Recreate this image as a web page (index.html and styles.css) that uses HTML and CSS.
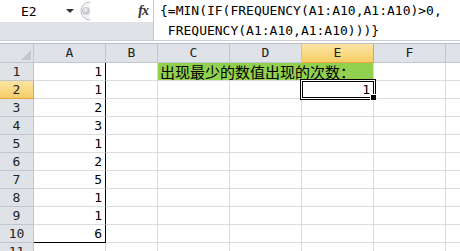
FILE: index.html
```html
<!DOCTYPE html>
<html lang="zh-CN">
<head>
    <meta charset="UTF-8" />
    <title>Excel - FREQUENCY</title>
    <link rel="stylesheet" href="styles.css">
</head>
<body>
    <div class="formula-bar">
        <div class="name-area">
            <div class="name-row">
                <div class="name-box">E2<span class="arrow"></span></div>
                <svg class="grip" width="14" height="22" viewBox="0 0 14 22">
                    <path d="M13 2 A9 9 0 0 0 13 20" fill="#f4f5f7" stroke="#b8bcc2" />
                    <circle cx="9" cy="11" r="4" fill="#c9ccd1" />
                    <circle cx="8.5" cy="10" r="2" fill="#e6e8eb" />
                </svg>
                <div class="fx">fx</div>
            </div>
        </div>
        <div class="formula">{=MIN(IF(FREQUENCY(A1:A10,A1:A10)&gt;0,
 FREQUENCY(A1:A10,A1:A10)))}</div>
    </div>
    <div class="sep"></div>

    <div class="sheet">
        <div class="c h corner"></div>
        <div class="c h">A</div>
        <div class="c h">B</div>
        <div class="c h">C</div>
        <div class="c h">D</div>
        <div class="c h on">E</div>
        <div class="c h">F</div>
        <div class="c h last"></div>

        <div class="c h">1</div>
        <div class="c a">1</div>
        <div class="c"></div>
        <div class="c note">出现最少的数值出现的次数：</div>
        <div class="c"></div>
        <div class="c last"></div>

        <div class="c h on">2</div>
        <div class="c a">1</div>
        <div class="c"></div>
        <div class="c"></div>
        <div class="c"></div>
        <div class="c sel">1</div>
        <div class="c"></div>
        <div class="c last"></div>

        <div class="c h">3</div>
        <div class="c a">2</div>
        <div class="c"></div><div class="c"></div><div class="c"></div><div class="c"></div><div class="c"></div><div class="c last"></div>

        <div class="c h">4</div>
        <div class="c a">3</div>
        <div class="c"></div><div class="c"></div><div class="c"></div><div class="c"></div><div class="c"></div><div class="c last"></div>

        <div class="c h">5</div>
        <div class="c a">1</div>
        <div class="c"></div><div class="c"></div><div class="c"></div><div class="c"></div><div class="c"></div><div class="c last"></div>

        <div class="c h">6</div>
        <div class="c a">2</div>
        <div class="c"></div><div class="c"></div><div class="c"></div><div class="c"></div><div class="c"></div><div class="c last"></div>

        <div class="c h">7</div>
        <div class="c a">5</div>
        <div class="c"></div><div class="c"></div><div class="c"></div><div class="c"></div><div class="c"></div><div class="c last"></div>

        <div class="c h">8</div>
        <div class="c a">1</div>
        <div class="c"></div><div class="c"></div><div class="c"></div><div class="c"></div><div class="c"></div><div class="c last"></div>

        <div class="c h">9</div>
        <div class="c a">1</div>
        <div class="c"></div><div class="c"></div><div class="c"></div><div class="c"></div><div class="c"></div><div class="c last"></div>

        <div class="c h">10</div>
        <div class="c a end">6</div>
        <div class="c"></div><div class="c"></div><div class="c"></div><div class="c"></div><div class="c"></div><div class="c last"></div>

        <div class="c h">11</div>
        <div class="c"></div><div class="c"></div><div class="c"></div><div class="c"></div><div class="c"></div><div class="c"></div><div class="c last"></div>
    </div>
</body>
</html>
```

FILE: styles.css
```css
body { margin: 0; background: #fff; color: #000; font-family: "DejaVu Sans Mono", monospace; font-size: 13px; overflow: hidden; }

.formula-bar { display: flex; height: 40px; }
.name-area { width: 153px; background: #dee1e6; }
.name-row { display: flex; align-items: center; height: 22px; background: #fff; }
.name-box { display: flex; align-items: center; width: 77px; padding-left: 21px; box-sizing: border-box; }
.arrow { margin-left: 29px; border-left: 4px solid transparent; border-right: 4px solid transparent; border-top: 4px solid #333; }
.grip { display: block; }
.fx { margin-left: auto; padding-right: 5px; font-family: "Liberation Serif", serif; font-style: italic; font-weight: bold; font-size: 14px; color: #333; letter-spacing: -1px; }
.formula { flex: 1; border-left: 1px solid #c6cace; padding: 1px 0 0 6px; line-height: 20px; white-space: pre; }
.sep { height: 2px; background: #fff; border-top: 1px solid #c9cdd2; border-bottom: 1px solid #b7bec8; }

.sheet { display: grid; grid-template-columns: 34px 72px 52px 72px 72px 72px 72px 14px; grid-template-rows: 19px repeat(11, 18px); }
.c { box-sizing: border-box; border-right: 1px solid #dadcdd; border-bottom: 1px solid #dadcdd; padding: 0 3px; line-height: 17px; text-align: right; white-space: nowrap; overflow: hidden; }
.c.last { border-right: 0; }
.h { padding: 0; text-align: center; background: #dfe2e6; border-color: #c2c6cc; color: #222; }
.sheet > .h:nth-child(-n+8) { line-height: 18px; }
.h.on { background: linear-gradient(#fbe5a4, #f6cd68); border-color: #e8a33c; }
.corner { position: relative; }
.corner::after { content: ""; position: absolute; right: 2px; bottom: 2px; border-left: 10px solid transparent; border-bottom: 10px solid #c3c6cb; }

.a { border-right-color: #000; }
.a.end { border-bottom-color: #000; }
.note { grid-column: span 3; text-align: left; padding-left: 2px; background: #92d050; font-family: "Noto Sans CJK SC", sans-serif; font-size: 15px; overflow: visible; }

.sel { position: relative; overflow: visible; }
.sel::after { content: ""; position: absolute; left: -2px; top: -2px; width: 76px; height: 21px; box-sizing: border-box; border: 1px solid #000; box-shadow: inset 0 0 0 1px #fff, inset 0 0 0 2px #000; z-index: 1; }
.sel::before { content: ""; position: absolute; right: -4px; bottom: -3px; width: 5px; height: 5px; background: #000; border: 1px solid #fff; z-index: 2; }
```
